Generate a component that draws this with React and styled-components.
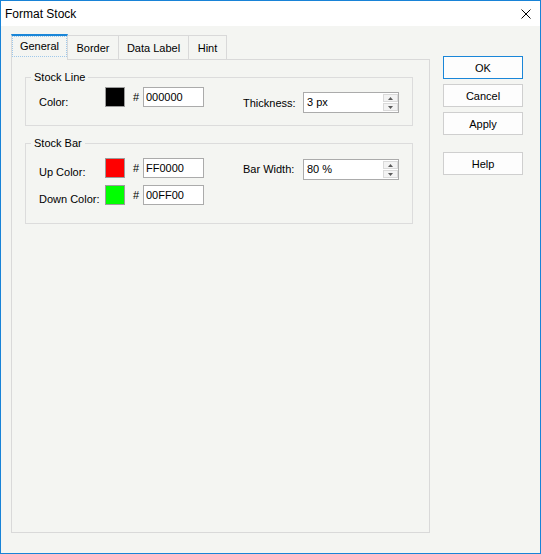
import React from "react";
import styled, { createGlobalStyle } from "styled-components";

const Global = createGlobalStyle`
  html, body { margin: 0; padding: 0; background: #f4f5f2; }
  body { font-family: "Liberation Sans", Arial, sans-serif; font-size: 11px; color: #000; }
  * { box-sizing: border-box; }
`;

const Window = styled.div`
  width: 541px;
  height: 554px;
  border: 1px solid #1883d7;
  background: #f4f5f2;
  display: flex;
  flex-direction: column;
`;

const TitleBar = styled.div`
  height: 25px;
  flex: none;
  background: #ffffff;
  display: flex;
  align-items: center;
  justify-content: space-between;
  padding: 0 9px 0 4px;
`;

const TitleText = styled.span`
  font-size: 12px;
  line-height: 16px;
`;

const CloseButton = styled.span`
  display: flex;
  width: 10px;
  height: 10px;
`;

const Body = styled.div`
  flex: 1;
  display: flex;
  padding: 8px 0 20px 10px;
`;

const LeftColumn = styled.div`
  width: 419px;
  display: flex;
  flex-direction: column;
`;

const TabStrip = styled.div`
  height: 25px;
  display: flex;
  align-items: flex-end;
  position: relative;
  z-index: 1;
`;

const Tab = styled.div`
  width: ${(p) => p.$w}px;
  height: ${(p) => (p.$active ? 26 : 24)}px;
  margin-bottom: ${(p) => (p.$active ? -1 : 0)}px;
  border-top: ${(p) => (p.$active ? "2px solid #1a86d8" : "1px solid #d9d9d9")};
  border-right: 1px solid #d9d9d9;
  border-left: ${(p) => (p.$first ? "1px solid #d9d9d9" : "none")};
  background: #f4f5f2;
  text-align: center;
  line-height: 14px;
  padding-top: ${(p) => (p.$active ? 3 : 5)}px;
  position: relative;
  &::after {
    content: "";
    display: ${(p) => (p.$active ? "block" : "none")};
    position: absolute;
    left: 0;
    right: 0;
    top: 0;
    bottom: 3px;
    border: 1px dotted #9fc8ea;
  }
`;

const Panel = styled.div`
  flex: 1;
  border: 1px solid #d9d9d9;
  padding: 10px 16px 0 13px;
  display: flex;
  flex-direction: column;
  gap: 10px;
`;

const Group = styled.fieldset`
  margin: 0;
  padding: 0;
  min-width: 0;
  border: 1px solid #dcdcdc;
`;

const Legend = styled.legend`
  margin-left: 5px;
  padding: 0 3px;
  line-height: 14px;
  font-size: 11px;
`;

const GroupBody = styled.div`
  padding: ${(p) => p.$pt}px 0 ${(p) => p.$pb}px 13px;
  display: flex;
  flex-direction: column;
  gap: 5px;
`;

const Row = styled.div`
  display: flex;
  align-items: flex-start;
`;

const FieldLabel = styled.span`
  width: ${(p) => p.$w}px;
  margin-top: ${(p) => p.$dy}px;
  margin-left: ${(p) => p.$ml || 0}px;
  line-height: 14px;
  white-space: nowrap;
  flex: none;
`;

const ColorPicker = styled.div`
  display: flex;
  align-items: center;
  flex: none;
`;

const Swatch = styled.span`
  width: 20px;
  height: 20px;
  border: 1px solid #9c9c9c;
  background: ${(p) => p.$color};
  margin-right: 8px;
`;

const Hash = styled.span`
  width: 10px;
  line-height: 14px;
`;

const HexInput = styled.input`
  width: 61px;
  height: 20px;
  border: 1px solid #ababab;
  background: #ffffff;
  padding: 0 0 0 2px;
  margin: 0;
  font-family: "Liberation Sans", Arial, sans-serif;
  font-size: 11px;
  color: #000;
  outline: none;
`;

const Spinner = styled.div`
  width: 96px;
  height: 21px;
  margin-top: ${(p) => p.$dy}px;
  border: 1px solid #ababab;
  background: #ffffff;
  display: flex;
  align-items: stretch;
  flex: none;
`;

const SpinValue = styled.span`
  flex: 1;
  padding-left: 3px;
  line-height: 19px;
`;

const SpinButtons = styled.div`
  width: 15px;
  display: flex;
  flex-direction: column;
  gap: 1px;
  padding: 1px 0 1px 0;
`;

const SpinButton = styled.span`
  flex: 1;
  border: 1px solid #dadada;
  background: #f3f3f3;
  display: flex;
  align-items: center;
  justify-content: center;
`;

const ButtonColumn = styled.div`
  width: 80px;
  margin-left: 13px;
  padding-top: 22px;
  display: flex;
  flex-direction: column;
  gap: 5px;
`;

const DialogButton = styled.div`
  height: 23px;
  margin-top: ${(p) => p.$mt || 0}px;
  border: 1px solid ${(p) => (p.$default ? "#1a86d8" : "#cfcfcf")};
  background: #fdfdfd;
  display: flex;
  align-items: center;
  justify-content: center;
  font-size: 11px;
`;

const Arrow = ({ up }) => (
  <svg width="5" height="3" viewBox="0 0 5 3">
    {up ? (
      <polygon points="2.5,0 5,3 0,3" fill="#5a5a5a" />
    ) : (
      <polygon points="0,0 5,0 2.5,3" fill="#5a5a5a" />
    )}
  </svg>
);

const SpinBox = ({ value, dy }) => (
  <Spinner $dy={dy}>
    <SpinValue>{value}</SpinValue>
    <SpinButtons>
      <SpinButton>
        <Arrow up />
      </SpinButton>
      <SpinButton>
        <Arrow />
      </SpinButton>
    </SpinButtons>
  </Spinner>
);

const ColorField = ({ color, hex }) => (
  <ColorPicker>
    <Swatch $color={color} />
    <Hash>#</Hash>
    <HexInput readOnly value={hex} />
  </ColorPicker>
);

export default function App() {
  return (
    <>
      <Global />
      <Window>
        <TitleBar>
          <TitleText>Format Stock</TitleText>
          <CloseButton>
            <svg width="10" height="10" viewBox="0 0 10 10">
              <path d="M0.5 0.5 L9.5 9.5 M9.5 0.5 L0.5 9.5" stroke="#000" strokeWidth="1" />
            </svg>
          </CloseButton>
        </TitleBar>
        <Body>
          <LeftColumn>
            <TabStrip>
              <Tab $w={57} $active $first>General</Tab>
              <Tab $w={51}>Border</Tab>
              <Tab $w={70}>Data Label</Tab>
              <Tab $w={38}>Hint</Tab>
            </TabStrip>
            <Panel>
              <Group>
                <Legend>Stock Line</Legend>
                <GroupBody $pt={3} $pb={12}>
                  <Row>
                    <FieldLabel $w={66} $dy={8}>Color:</FieldLabel>
                    <ColorField color="#000000" hex="000000" />
                    <FieldLabel $w={60} $dy={9} $ml={39}>Thickness:</FieldLabel>
                    <SpinBox value="3 px" dy={5} />
                  </Row>
                </GroupBody>
              </Group>
              <Group>
                <Legend>Stock Bar</Legend>
                <GroupBody $pt={8} $pb={17}>
                  <Row>
                    <FieldLabel $w={66} $dy={7}>Up Color:</FieldLabel>
                    <ColorField color="#ff0000" hex="FF0000" />
                    <FieldLabel $w={60} $dy={4} $ml={39}>Bar Width:</FieldLabel>
                    <SpinBox value="80 %" dy={1} />
                  </Row>
                  <Row>
                    <FieldLabel $w={66} $dy={7}>Down Color:</FieldLabel>
                    <ColorField color="#00ff00" hex="00FF00" />
                  </Row>
                </GroupBody>
              </Group>
            </Panel>
          </LeftColumn>
          <ButtonColumn>
            <DialogButton $default>OK</DialogButton>
            <DialogButton>Cancel</DialogButton>
            <DialogButton>Apply</DialogButton>
            <DialogButton $mt={12}>Help</DialogButton>
          </ButtonColumn>
        </Body>
      </Window>
    </>
  );
}
